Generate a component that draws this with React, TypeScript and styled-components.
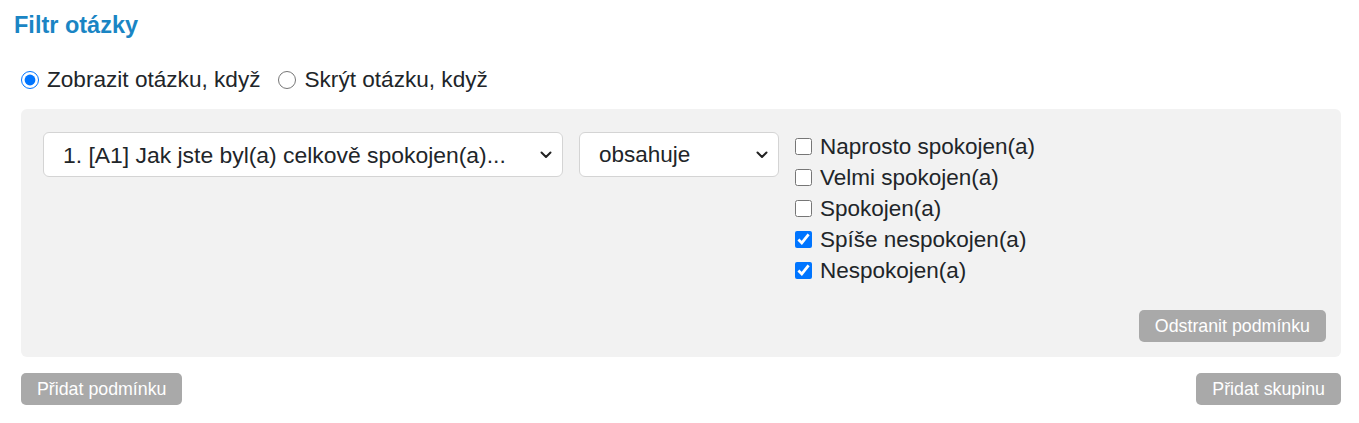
import React, { useState } from 'react';
import styled, { createGlobalStyle } from 'styled-components';

const GlobalStyle = createGlobalStyle`
    body {
        margin: 0;
        background: #ffffff;
        font-family: "Liberation Sans", Arial, sans-serif;
        color: #212529;
    }
`;

const Page = styled.div`
    padding: 11px 18px 0 14px;
`;

const Title = styled.h2`
    margin: 0;
    font-size: 23.5px;
    font-weight: bold;
    color: #1a85c4;
    line-height: 28px;
`;

const Body = styled.div`
    margin-left: 7px;
`;

const ModeRow = styled.div`
    display: flex;
    align-items: center;
    gap: 18px;
    margin-top: 25px;
    height: 32px;
`;

const RadioLabel = styled.label`
    display: flex;
    align-items: center;
    gap: 8px;
    font-size: 22.6px;
    cursor: pointer;
`;

const Radio = styled.input`
    width: 18px;
    height: 18px;
    margin: 0;
    accent-color: #0075ff;
`;

const Panel = styled.div`
    margin-top: 13px;
    background: #f2f2f2;
    border-radius: 6px;
    padding: 23px 15px 15px 22px;
`;

const ConditionRow = styled.div`
    display: flex;
    align-items: flex-start;
    gap: 16px;
`;

const SelectWrap = styled.div<{ $width: number }>`
    position: relative;
    width: ${(p) => p.$width}px;
`;

const Select = styled.select<{ $size: number }>`
    appearance: none;
    width: 100%;
    height: 45px;
    padding: 0 40px 0 19px;
    border: 1px solid #d4d4d4;
    border-radius: 6px;
    background: #ffffff;
    font-family: inherit;
    font-size: ${(p) => p.$size}px;
    color: #212529;
`;

const Chevron = styled.svg`
    position: absolute;
    right: 10px;
    top: 16px;
    pointer-events: none;
`;

const Options = styled.div`
    display: flex;
    flex-direction: column;
    margin-top: -1px;
`;

const OptionLabel = styled.label`
    display: flex;
    align-items: center;
    gap: 8px;
    height: 31px;
    font-size: 22.5px;
    cursor: pointer;
`;

const Checkbox = styled.input`
    width: 17px;
    height: 17px;
    margin: 0;
    accent-color: #0075ff;
`;

const PanelFooter = styled.div`
    display: flex;
    justify-content: flex-end;
    margin-top: 24px;
`;

const GreyButton = styled.button`
    height: 32px;
    padding: 0 16px;
    border: none;
    border-radius: 5px;
    background: #a9a9a9;
    color: #ffffff;
    font-family: inherit;
    font-size: 17.8px;
    cursor: pointer;
`;

const BottomRow = styled.div`
    display: flex;
    justify-content: space-between;
    margin-top: 16px;
`;

const ChevronIcon = () => (
    <Chevron width="14" height="14" viewBox="0 0 14 14">
        <path d="M2.5 4.5 L7 9 L11.5 4.5" fill="none" stroke="#222" strokeWidth="2" strokeLinecap="round" strokeLinejoin="round" />
    </Chevron>
);

const answers = [
    'Naprosto spokojen(a)',
    'Velmi spokojen(a)',
    'Spokojen(a)',
    'Spíše nespokojen(a)',
    'Nespokojen(a)',
];

const App: React.FC = () => {
    const [mode, setMode] = useState('show');
    const [checked, setChecked] = useState<boolean[]>([false, false, false, true, true]);

    const toggle = (i: number) => {
        setChecked((prev) => prev.map((v, j) => (j === i ? !v : v)));
    };

    return (
        <>
            <GlobalStyle />
            <Page>
                <Title>Filtr otázky</Title>
                <Body>
                    <ModeRow>
                        <RadioLabel>
                            <Radio type="radio" name="mode" checked={mode === 'show'} onChange={() => setMode('show')} />
                            Zobrazit otázku, když
                        </RadioLabel>
                        <RadioLabel>
                            <Radio type="radio" name="mode" checked={mode === 'hide'} onChange={() => setMode('hide')} />
                            Skrýt otázku, když
                        </RadioLabel>
                    </ModeRow>
                    <Panel>
                        <ConditionRow>
                            <SelectWrap $width={520}>
                                <Select $size={22.9} defaultValue="a1">
                                    <option value="a1">1. [A1] Jak jste byl(a) celkově spokojen(a)...</option>
                                </Select>
                                <ChevronIcon />
                            </SelectWrap>
                            <SelectWrap $width={200}>
                                <Select $size={22.5} defaultValue="contains">
                                    <option value="contains">obsahuje</option>
                                    <option value="not">neobsahuje</option>
                                </Select>
                                <ChevronIcon />
                            </SelectWrap>
                            <Options>
                                {answers.map((a, i) => (
                                    <OptionLabel key={a}>
                                        <Checkbox type="checkbox" checked={checked[i]} onChange={() => toggle(i)} />
                                        {a}
                                    </OptionLabel>
                                ))}
                            </Options>
                        </ConditionRow>
                        <PanelFooter>
                            <GreyButton>Odstranit podmínku</GreyButton>
                        </PanelFooter>
                    </Panel>
                    <BottomRow>
                        <GreyButton>Přidat podmínku</GreyButton>
                        <GreyButton>Přidat skupinu</GreyButton>
                    </BottomRow>
                </Body>
            </Page>
        </>
    );
};

export default App;
